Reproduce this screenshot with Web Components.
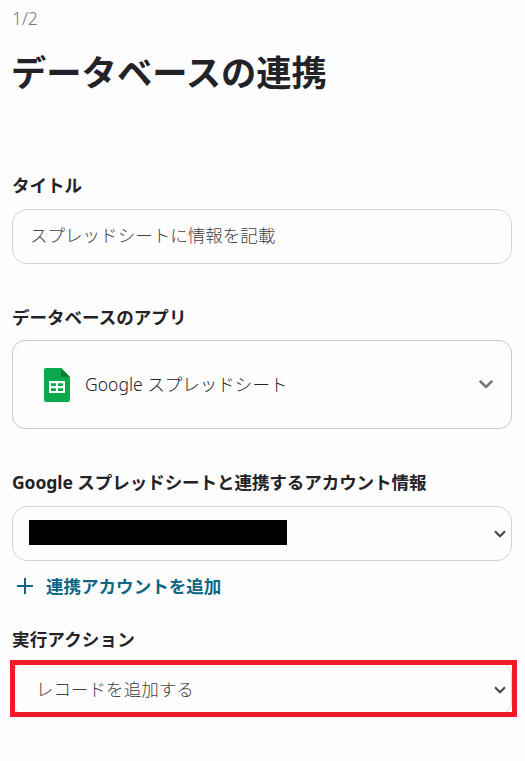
<!DOCTYPE html>
<html lang="ja">
<head>
<meta charset="UTF-8">
<title>データベースの連携</title>
<style>
  body {
    margin: 0;
    background: #fdfdfe;
    color: #232226;
    font-family: 'Noto Sans', 'Noto Sans CJK JP', sans-serif;
    font-size: 17.55px;
    line-height: 24px;
  }
</style>
</head>
<body>
<integration-form>
  <step-header step="1/2">データベースの連携</step-header>
  <form-field label="タイトル" style="margin-top: 77px">
    <input-box>スプレッドシートに情報を記載</input-box>
  </form-field>
  <form-field label="データベースのアプリ" style="margin-top: 41px; --label-gap: 11px">
    <app-select><sheets-icon slot="icon"></sheets-icon>Google スプレッドシート</app-select>
  </form-field>
  <form-field label="Google スプレッドシートと連携するアカウント情報" style="margin-top: 41px; --label-spacing: -0.08px">
    <input-box select><redacted-text></redacted-text></input-box>
  </form-field>
  <add-link>連携アカウントを追加</add-link>
  <form-field label="実行アクション" style="margin-top: 29px; --label-gap: 10px; --label-spacing: 0.15px">
    <input-box select highlight>レコードを追加する</input-box>
  </form-field>
</integration-form>

<script>
class IntegrationForm extends HTMLElement {
  connectedCallback() {
    this.attachShadow({ mode: 'open' });
    this.shadowRoot.innerHTML = `
      <style>
        :host {
          display: flex;
          flex-direction: column;
          box-sizing: border-box;
          width: 525px;
          height: 761px;
          padding: 6px 13px 0 12px;
        }
      </style>
      <slot></slot>
    `;
  }
}

class StepHeader extends HTMLElement {
  connectedCallback() {
    this.attachShadow({ mode: 'open' });
    this.shadowRoot.innerHTML = `
      <style>
        :host {
          display: block;
        }

        .step {
          color: #78777c;
          font-size: 17.5px;
          letter-spacing: -0.1px;
          font-weight: 300;
        }

        h1 {
          margin: 18px 0 0 -1px;
          font-size: 35.3px;
          line-height: 48px;
          font-weight: 700;
          white-space: nowrap;
        }
      </style>
      <div class="step">${this.getAttribute('step')}</div>
      <h1><slot></slot></h1>
    `;
  }
}

class FormField extends HTMLElement {
  connectedCallback() {
    this.attachShadow({ mode: 'open' });
    this.shadowRoot.innerHTML = `
      <style>
        :host {
          display: flex;
          flex-direction: column;
          gap: var(--label-gap, 12px);
        }

        .label {
          font-weight: 700;
          letter-spacing: var(--label-spacing, 0);
          white-space: nowrap;
        }
      </style>
      <div class="label">${this.getAttribute('label')}</div>
      <slot></slot>
    `;
  }
}

class InputBox extends HTMLElement {
  connectedCallback() {
    const arrow = this.hasAttribute('select')
      ? `<svg width="12" height="8" viewBox="0 0 12 8" fill="none" stroke="#49484d" stroke-width="2.2"><path d="M1 1.2 6 6.2 11 1.2"/></svg>`
      : '';
    this.attachShadow({ mode: 'open' });
    this.shadowRoot.innerHTML = `
      <style>
        :host {
          display: flex;
          align-items: center;
          justify-content: space-between;
          position: relative;
          box-sizing: border-box;
          height: 55px;
          padding: 0 5px 2px 17px;
          border: 1px solid #cfd4df;
          border-radius: 15px;
          color: #3f3e43;
          font-weight: 300;
        }

        :host(:not([select])) {
          padding-bottom: 4px;
        }

        :host([highlight]) {
          padding: 0 5px 0 23px;
        }

        /* red frame laid over the field */
        :host([highlight])::after {
          content: '';
          position: absolute;
          top: -2px;
          left: -3px;
          width: 497px;
          height: 47px;
          border: 5px solid #f11b27;
        }

        svg {
          margin-top: 2px;
        }
      </style>
      <span><slot></slot></span>
      ${arrow}
    `;
  }
}

class AppSelect extends HTMLElement {
  connectedCallback() {
    this.attachShadow({ mode: 'open' });
    this.shadowRoot.innerHTML = `
      <style>
        :host {
          display: flex;
          align-items: center;
          box-sizing: border-box;
          height: 89px;
          padding: 0 18px 0 31px;
          border: 1px solid #c9c8cc;
          border-radius: 13px;
          color: #232226;
          font-weight: 300;
        }

        .name {
          flex: 1;
          margin-left: 15px;
          padding-bottom: 2px;
        }
      </style>
      <slot name="icon"></slot>
      <span class="name"><slot></slot></span>
      <svg width="14" height="9" viewBox="0 0 14 9" fill="none" stroke="#78777b" stroke-width="2.5" stroke-linecap="round" stroke-linejoin="round"><path d="M1.5 1.5 7 7 12.5 1.5"/></svg>
    `;
  }
}

class SheetsIcon extends HTMLElement {
  connectedCallback() {
    this.attachShadow({ mode: 'open' });
    this.shadowRoot.innerHTML = `
      <style>
        :host {
          display: block;
          height: 34px;
        }

        svg {
          display: block;
        }
      </style>
      <svg width="26" height="34" viewBox="0 0 26 34">
        <path fill="#08aa4b" d="M2 0h15l9 9v23a2 2 0 0 1-2 2H2a2 2 0 0 1-2-2V2a2 2 0 0 1 2-2z"/>
        <path fill="#078034" d="M17 0l9 9h-9z"/>
        <path fill="#fff" fill-rule="evenodd" d="M5 13h16v12H5zM7 15.3v2.7h5v-2.7zM14 15.3v2.7h5v-2.7zM7 20.2v2.7h5v-2.7zM14 20.2v2.7h5v-2.7z"/>
      </svg>
    `;
  }
}

class RedactedText extends HTMLElement {
  connectedCallback() {
    this.attachShadow({ mode: 'open' });
    this.shadowRoot.innerHTML = `
      <style>
        :host {
          display: block;
          width: 258px;
          height: 25px;
          margin-left: -1px;
          background: #000;
        }
      </style>
    `;
  }
}

class AddLink extends HTMLElement {
  connectedCallback() {
    this.attachShadow({ mode: 'open' });
    this.shadowRoot.innerHTML = `
      <style>
        :host {
          display: flex;
          align-items: center;
          gap: 13px;
          margin-top: 13px;
          padding-left: 5px;
          color: #0d6782;
          font-weight: 700;
        }
      </style>
      <svg width="16" height="16" viewBox="0 0 16 16" stroke="currentColor" stroke-width="2"><path d="M8 0v16M0 8h16"/></svg>
      <span><slot></slot></span>
    `;
  }
}

customElements.define('integration-form', IntegrationForm);
customElements.define('step-header', StepHeader);
customElements.define('form-field', FormField);
customElements.define('input-box', InputBox);
customElements.define('app-select', AppSelect);
customElements.define('sheets-icon', SheetsIcon);
customElements.define('redacted-text', RedactedText);
customElements.define('add-link', AddLink);
</script>
</body>
</html>
